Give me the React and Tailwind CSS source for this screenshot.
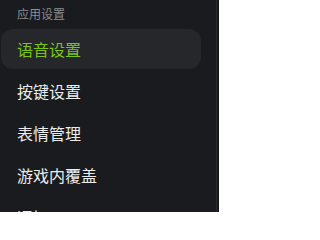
import React, { useState } from 'react';

const items = ['语音设置', '按键设置', '表情管理', '游戏内覆盖', '通知'];

const App = () => {
    const [active, setActive] = useState(0);

    return (
        <div className="flex h-[212px] w-[219px] overflow-hidden bg-[#1a1b1e]" style={{ fontFamily: '"Noto Sans CJK SC", "Noto Sans", sans-serif' }}>
            {/* Sidebar */}
            <aside className="w-[216px] shrink-0 pl-[1px] pr-[15px]">
                <div className="h-[29px] pl-4 pt-1 text-xs leading-[20px] text-[#8b8c8f]">应用设置</div>
                <ul className="flex flex-col gap-[2px]">
                    {items.map((name, idx) => (
                        <li
                            key={name}
                            onClick={() => setActive(idx)}
                            className={`flex h-10 cursor-pointer items-center rounded-xl px-4 text-base ${active === idx ? 'bg-[#26272b] text-[#7bc31c]' : 'text-[#ececec]'}`}
                        >
                            {name}
                        </li>
                    ))}
                </ul>
            </aside>
            <div className="w-px shrink-0 bg-[#2a2b2f]" />
            <div className="flex-1 bg-[#17181b]" />
        </div>
    );
};

export default App;
